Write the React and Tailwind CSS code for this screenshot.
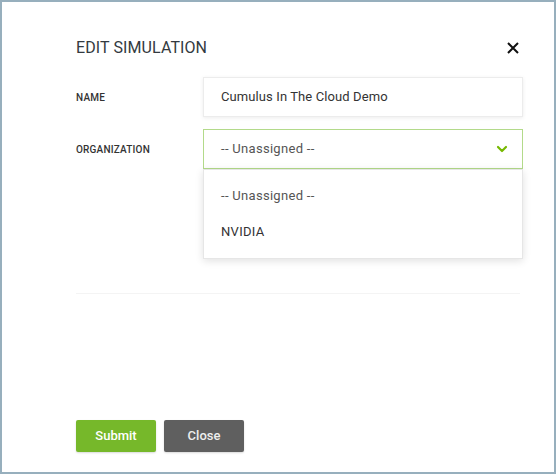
import React from "react";

const font = { fontFamily: "Roboto, 'Liberation Sans', sans-serif" };

function Chevron() {
  return (
    <svg width="12" height="8" viewBox="0 0 12 8" fill="none">
      <path d="M2 2l4 4 4-4" stroke="#76b900" strokeWidth="2.2" strokeLinecap="round" strokeLinejoin="round" />
    </svg>
  );
}

export default function App() {
  return (
    <div style={font} className="w-[556px] h-[474px] border-2 border-[#97afbd] bg-white flex flex-col">
      <div className="flex items-center justify-between pl-[74px] pr-[35px] pt-[36px]">
        <h1 className="text-[16px] leading-[20px] tracking-[0.1px] text-[#333a40]">EDIT SIMULATION</h1>
        <svg width="12" height="12" viewBox="0 0 12 12">
          <path d="M1 1l10 10M11 1L1 11" stroke="#111" strokeWidth="2" />
        </svg>
      </div>

      <div className="pl-[74px] pt-[19px] flex flex-col gap-3">
        <div className="flex items-center">
          <span className="w-[127px] text-[10px] font-medium text-[#333] tracking-[0.2px]">NAME</span>
          <div className="w-[320px] h-10 border border-[#ececec] shadow-[0_1px_4px_rgba(0,0,0,0.08)] flex items-center pl-[17px] text-[13px] tracking-[0.1px] text-[#333]">
            Cumulus In The Cloud Demo
          </div>
        </div>
        <div className="flex items-center">
          <span className="w-[127px] text-[10px] font-medium text-[#333] tracking-[0.2px]">ORGANIZATION</span>
          <div className="relative w-[320px]">
            <div className="h-10 border border-[#b3da8a] flex items-center justify-between pl-[17px] pr-[14px] text-[13px] tracking-[0.3px] text-[#555]">
              <span>-- Unassigned --</span>
              <Chevron />
            </div>
            <div className="absolute left-0 top-10 w-full bg-white border border-[#e6e6e6] shadow-[0_2px_8px_rgba(0,0,0,0.12)] py-2 text-[13px] tracking-[0.3px] z-10">
              <div className="h-9 flex items-center pl-[17px] text-[#555]">-- Unassigned --</div>
              <div className="h-9 flex items-center pl-[17px] text-[#333]">NVIDIA</div>
            </div>
          </div>
        </div>
      </div>

      <div className="ml-[74px] mr-[34px] mt-[124px] border-t border-[#f4f4f4]" />

      <div className="mt-auto flex gap-2 pl-[74px] pb-[20px]">
        <button className="w-20 h-8 rounded-[2px] bg-[#76b82a] text-white text-[13px] font-medium shadow-[0_1px_2px_rgba(0,0,0,0.15)]">Submit</button>
        <button className="w-20 h-8 rounded-[2px] bg-[#5f5f5f] text-[#eeeeee] text-[13px] font-medium shadow-[0_1px_2px_rgba(0,0,0,0.15)]">Close</button>
      </div>
    </div>
  );
}
